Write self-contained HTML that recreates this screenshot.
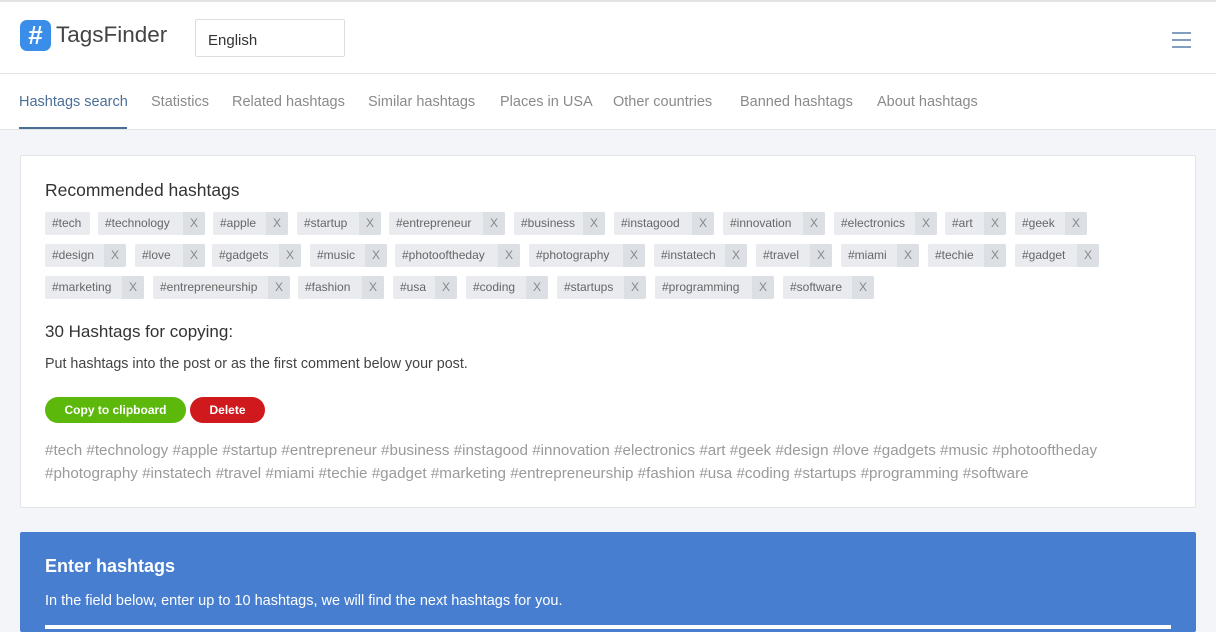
<!DOCTYPE html><html><head><meta charset="utf-8"><style>
*{box-sizing:border-box;margin:0;padding:0}
body{width:1216px;height:627px;overflow:hidden;background:#f3f5f8;font-family:"Liberation Sans",sans-serif;position:relative}
.hdr{position:absolute;left:0;top:0;width:1216px;height:130px;background:#fff;border-top:2px solid #e3e3e3}
.a{position:absolute;white-space:nowrap}
.nav{font-size:14.5px;color:#8a8a8a;top:92px}
.tag{position:absolute;height:23px;background:#e9ebee;border-radius:2px;font-size:12px;color:#666;line-height:23px;padding-left:7px;white-space:nowrap;overflow:hidden}
.tag i{position:absolute;right:0;top:0;width:22px;height:23px;background:#dcdfe3;font-style:normal;text-align:center;color:#888}
</style></head><body>
<div class="hdr">
<div class="a" style="left:20px;top:18px;width:31px;height:31px;background:#3a8de8;border-radius:7px;color:#fff;font-size:26px;font-weight:bold;text-align:center;line-height:31px">#</div>
<div class="a" style="left:56px;top:20px;font-size:22.5px;color:#444">TagsFinder</div>
<div class="a" style="left:195px;top:17px;width:150px;height:38px;border:1px solid #ddd;border-radius:2px;font-size:15px;color:#333;padding:12px 0 0 12px">English</div>
<svg class="a" style="left:1172px;top:29px" width="19" height="18"><path d="M0 2H19M0 9H19M0 16H19" stroke="#5a7fa8" stroke-width="1.6"/></svg>
<div class="a" style="left:0;top:71px;width:1216px;height:1px;background:#e3e3e3"></div>
<div class="a nav" style="left:19px;color:#4a6f96">Hashtags search</div>
<div class="a" style="left:19px;top:125px;width:108px;height:2px;background:#4a6f96"></div>
<div class="a nav" style="left:151px">Statistics</div>
<div class="a nav" style="left:232px">Related hashtags</div>
<div class="a nav" style="left:368px">Similar hashtags</div>
<div class="a nav" style="left:500px">Places in USA</div>
<div class="a nav" style="left:613px">Other countries</div>
<div class="a nav" style="left:740px">Banned hashtags</div>
<div class="a nav" style="left:877px">About hashtags</div>
</div>
<div class="a" style="left:0;top:129px;width:1216px;height:1px;background:#e3e3e3"></div>
<div class="a" style="left:20px;top:155px;width:1176px;height:353px;background:#fff;border:1px solid #e2e4e8;border-radius:2px"></div>
<div class="a" style="left:45px;top:180px;font-size:17.5px;color:#333">Recommended hashtags</div>
<div class="tag" style="left:45px;top:212px;width:45px">#tech</div>
<div class="tag" style="left:98px;top:212px;width:107px">#technology<i>X</i></div>
<div class="tag" style="left:213px;top:212px;width:75px">#apple<i>X</i></div>
<div class="tag" style="left:297px;top:212px;width:84px">#startup<i>X</i></div>
<div class="tag" style="left:389px;top:212px;width:116px">#entrepreneur<i>X</i></div>
<div class="tag" style="left:514px;top:212px;width:91px">#business<i>X</i></div>
<div class="tag" style="left:614px;top:212px;width:100px">#instagood<i>X</i></div>
<div class="tag" style="left:723px;top:212px;width:102px">#innovation<i>X</i></div>
<div class="tag" style="left:834px;top:212px;width:103px">#electronics<i>X</i></div>
<div class="tag" style="left:945px;top:212px;width:61px">#art<i>X</i></div>
<div class="tag" style="left:1015px;top:212px;width:72px">#geek<i>X</i></div>
<div class="tag" style="left:45px;top:244px;width:81px">#design<i>X</i></div>
<div class="tag" style="left:135px;top:244px;width:70px">#love<i>X</i></div>
<div class="tag" style="left:212px;top:244px;width:89px">#gadgets<i>X</i></div>
<div class="tag" style="left:310px;top:244px;width:77px">#music<i>X</i></div>
<div class="tag" style="left:395px;top:244px;width:125px">#photooftheday<i>X</i></div>
<div class="tag" style="left:529px;top:244px;width:116px">#photography<i>X</i></div>
<div class="tag" style="left:654px;top:244px;width:93px">#instatech<i>X</i></div>
<div class="tag" style="left:756px;top:244px;width:76px">#travel<i>X</i></div>
<div class="tag" style="left:841px;top:244px;width:78px">#miami<i>X</i></div>
<div class="tag" style="left:928px;top:244px;width:78px">#techie<i>X</i></div>
<div class="tag" style="left:1015px;top:244px;width:84px">#gadget<i>X</i></div>
<div class="tag" style="left:45px;top:276px;width:99px">#marketing<i>X</i></div>
<div class="tag" style="left:153px;top:276px;width:137px">#entrepreneurship<i>X</i></div>
<div class="tag" style="left:298px;top:276px;width:86px">#fashion<i>X</i></div>
<div class="tag" style="left:393px;top:276px;width:64px">#usa<i>X</i></div>
<div class="tag" style="left:466px;top:276px;width:82px">#coding<i>X</i></div>
<div class="tag" style="left:557px;top:276px;width:89px">#startups<i>X</i></div>
<div class="tag" style="left:655px;top:276px;width:119px">#programming<i>X</i></div>
<div class="tag" style="left:783px;top:276px;width:91px">#software<i>X</i></div>
<div class="a" style="left:45px;top:322px;font-size:17px;color:#333">30 Hashtags for copying:</div>
<div class="a" style="left:45px;top:356px;font-size:14.3px;color:#444">Put hashtags into the post or as the first comment below your post.</div>
<div class="a" style="left:45px;top:397px;width:141px;height:26px;border-radius:13px;background:#5cb80a;color:#fff;font-size:12px;font-weight:bold;text-align:center;line-height:26px">Copy to clipboard</div>
<div class="a" style="left:190px;top:397px;width:75px;height:26px;border-radius:13px;background:#d0191d;color:#fff;font-size:12px;font-weight:bold;text-align:center;line-height:26px">Delete</div>
<div class="a" style="left:45px;top:439px;font-size:15.2px;line-height:23px;color:#9a9a9a;white-space:normal;width:1130px">#tech #technology #apple #startup #entrepreneur #business #instagood #innovation #electronics #art #geek #design #love #gadgets #music #photooftheday<br>#photography #instatech #travel #miami #techie #gadget #marketing #entrepreneurship #fashion #usa #coding #startups #programming #software</div>
<div class="a" style="left:20px;top:532px;width:1176px;height:100px;background:#477ed0;border-radius:2px"></div>
<div class="a" style="left:45px;top:556px;font-size:18px;font-weight:bold;color:#fff">Enter hashtags</div>
<div class="a" style="left:45px;top:593px;font-size:14.5px;color:#fff">In the field below, enter up to 10 hashtags, we will find the next hashtags for you.</div>
<div class="a" style="left:45px;top:625px;width:1126px;height:4px;background:#fff"></div>
</body></html>
